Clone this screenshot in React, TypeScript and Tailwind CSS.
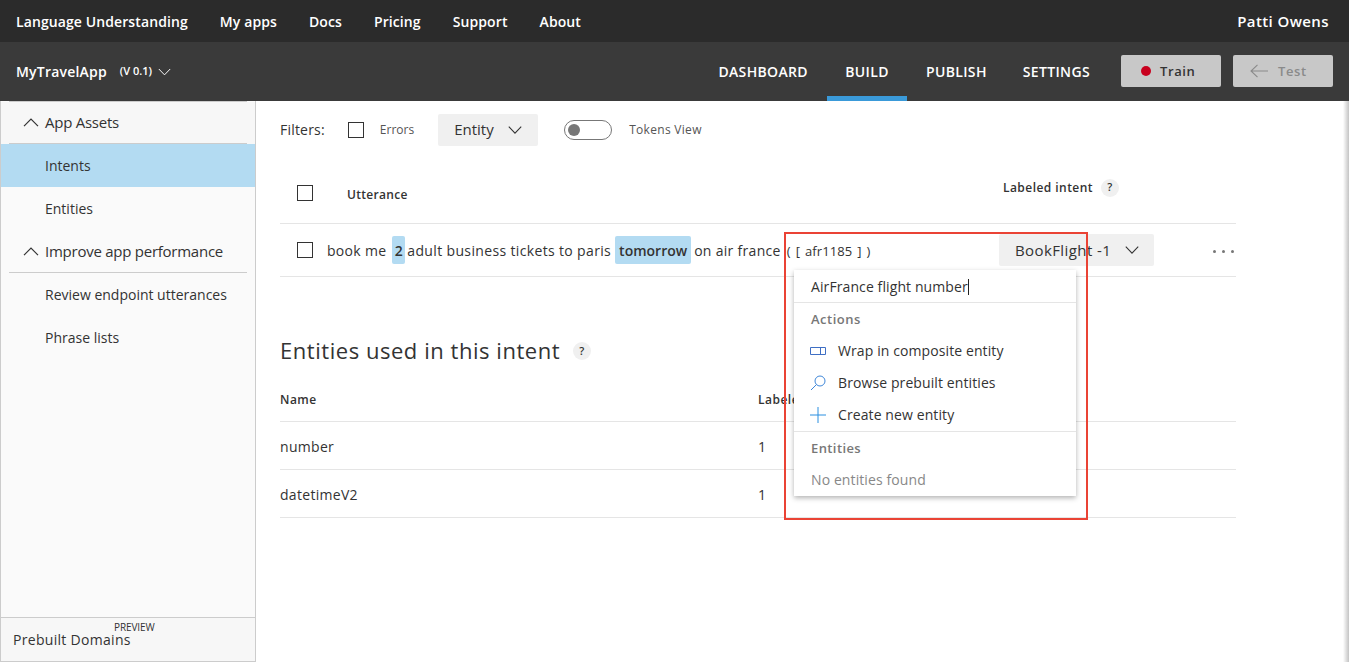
import React from "react";

const Chev = ({ up = false, className = "" }: { up?: boolean; className?: string }) => (
  <svg viewBox="0 0 16 9" className={className} fill="none" stroke="currentColor" strokeWidth="1.2">
    {up ? <path d="M1 8.2 8 1l7 7.2" /> : <path d="M1 .8 8 8l7-7.2" />}
  </svg>
);

const Box = ({ className = "" }: { className?: string }) => (
  <span className={"block w-4 h-4 border border-[#333] shrink-0 " + className} />
);

const Q = () => (
  <span className="w-[18px] h-[18px] rounded-full bg-[#f0f0f0] text-[#333] text-[11px] font-semibold flex items-center justify-center">?</span>
);

const SideHead = ({ children, first = false }: { children: React.ReactNode; first?: boolean }) => (
  <div className={"mx-2 pl-[15px] flex items-center gap-[6px] border-b border-[#ccc] text-[15px] text-[#333] tracking-[-0.25px] " + (first ? "h-[42px]" : "h-[43px]")}>
    <Chev up className="w-4 h-[9px] -ml-[1px] text-[#333]" />
    <span>{children}</span>
  </div>
);

const SideItem = ({ children, active = false }: { children: React.ReactNode; active?: boolean }) => (
  <div className={"h-[43px] pl-[44px] flex items-center text-sm text-[#333] " + (active ? "bg-[#b3dbf2]" : "")}>{children}</div>
);

export default function App() {
  return (
    <div className="relative w-[1349px] h-[662px] overflow-hidden bg-white text-[#333] font-['Open_Sans','Noto_Sans',sans-serif]">
      <header className="h-[42px] bg-[#2b2b2b] flex items-center justify-between pl-4 pr-5 pt-[2px] text-white text-sm font-semibold">
        <nav className="flex items-center gap-8 tracking-[0.1px]">
          <span>Language Understanding</span>
          <span>My apps</span>
          <span>Docs</span>
          <span>Pricing</span>
          <span>Support</span>
          <span>About</span>
        </nav>
        <span className="text-[15px] tracking-[0.4px]">Patti Owens</span>
      </header>

      <div className="h-[59px] bg-[#3a3a3a] flex items-center justify-between pl-4 pr-4 text-white">
        <div className="flex items-center">
          <span className="text-sm font-semibold tracking-[0.2px]">MyTravelApp</span>
          <span className="ml-[13px] text-[11px] font-semibold">(V 0.1)</span>
          <Chev className="ml-[6px] w-[13px] h-[8px]" />
        </div>
        <div className="flex items-center h-full">
          <nav className="flex h-full text-sm font-semibold tracking-[0.35px]">
            <span className="h-full flex items-center px-[19px]">DASHBOARD</span>
            <span className="h-full w-[80px] flex items-center justify-center border-b-[5px] border-[#3a9ad9] pt-[5px]">BUILD</span>
            <span className="h-full flex items-center pl-[19px] pr-[17px]">PUBLISH</span>
            <span className="h-full flex items-center px-[19px]">SETTINGS</span>
          </nav>
          <button className="ml-[12px] -mt-[2px] w-[100px] h-8 bg-[#c8c8c8] rounded-[2px] flex items-center pl-5 gap-[9px] text-[13px] font-semibold text-[#333] tracking-[0.6px]">
            <span className="w-[10px] h-[10px] rounded-full bg-[#c8001e]" />
            <span className="pt-[2px]">Train</span>
          </button>
          <button className="ml-3 -mt-[2px] w-[100px] h-8 bg-[#c8c8c8] rounded-[2px] flex items-center pl-[17px] gap-[10px] text-[13px] font-semibold text-[#8a8a8a] tracking-[0.6px]">
            <svg viewBox="0 0 18 14" className="w-[18px] h-[14px]" fill="none" stroke="#8a8a8a" strokeWidth="1.1"><path d="M18 7H1M7.5.8 1 7l6.5 6.2" /></svg>
            <span className="pt-[2px]">Test</span>
          </button>
        </div>
      </div>

      <div className="flex h-[561px]">
        <aside className="w-[256px] shrink-0 h-full bg-[#fafafa] border-x border-[#ccc] border-b flex flex-col">
          <div className="mx-2 border-t border-[#ccc]" />
          <div className="bg-[#f7f7f7]"><SideHead first>App Assets</SideHead></div>
          <SideItem active>Intents</SideItem>
          <SideItem>Entities</SideItem>
          <SideHead>Improve app performance</SideHead>
          <SideItem>Review endpoint utterances</SideItem>
          <SideItem>Phrase lists</SideItem>
          <div className="mt-auto h-[44px] bg-[#f7f7f7] border-t border-[#ccc] pl-3 relative">
            <span className="absolute left-[113px] top-[4px] text-[10px] leading-[10px] tracking-[-0.1px]">PREVIEW</span>
            <span className="absolute left-3 top-[15px] text-sm leading-[14px] tracking-[0.3px]">Prebuilt Domains</span>
          </div>
        </aside>

        <main className="flex-1 pl-6 pr-[113px] text-sm">
          <div className="h-[32px] mt-[13px] flex items-center">
            <span className="text-sm tracking-[0.2px]">Filters:</span>
            <Box className="ml-[23px] border-[#5c2d91]" />
            <span className="ml-4 text-xs text-[#555]">Errors</span>
            <span className="ml-6 w-[100px] h-8 bg-[#f0f0f0] rounded-[2px] flex items-center pl-4 gap-[13px] text-[15px]">
              Entity <Chev className="w-4 h-[8px]" />
            </span>
            <span className="ml-[26px] w-[48px] h-[20px] -mt-[1px] rounded-full border border-[#777] flex items-center pl-[3px]">
              <span className="w-3 h-3 rounded-full bg-[#777]" />
            </span>
            <span className="ml-[17px] -mt-[1px] text-xs tracking-[0.3px] text-[#555]">Tokens View</span>
          </div>

          <div className="h-[78px] border-b border-[#e5e5e5] flex items-center pl-[17px] pt-[18px]">
            <Box className="mb-[2px]" />
            <span className="ml-[34px] pt-[2px] text-xs font-semibold tracking-[0.3px]">Utterance</span>
            <span className="ml-auto mr-[117px] mb-[12px] flex items-center gap-2 text-xs font-semibold tracking-[0.45px]">Labeled intent <Q /></span>
          </div>

          <div className="h-[53px] border-b border-[#e5e5e5] flex items-center pl-[17px] tracking-[0.3px]">
            <Box />
            <span className="ml-[14px] pt-[2px]">book me</span>
            <span className="ml-[6px] h-7 w-[13px] pt-[2px] bg-[#b3dbf2] rounded-[2px] flex items-center justify-center font-semibold">2</span>
            <span className="ml-[2px] pt-[2px] tracking-[0.35px]">adult business tickets to paris</span>
            <span className="ml-[4px] h-7 w-[76px] pt-[2px] bg-[#b3dbf2] rounded-[2px] flex items-center justify-center font-semibold tracking-normal">tomorrow</span>
            <span className="ml-[3px] pt-[2px]">on air france</span>
            <span className="ml-[6px] pt-[2px] text-[13px] tracking-[0.1px] [word-spacing:1.5px]">( [ afr1185 ] )</span>
            <span className="ml-auto w-[155px] h-8 bg-[#f0f0f0] rounded-[2px] flex items-center pl-4 gap-[13px] pt-[2px] text-[15px] tracking-[0.4px]">
              BookFlight -1 <Chev className="w-4 h-[8px] -mt-[2px]" />
            </span>
            <span className="ml-[59px] mr-[2px] mt-[2px] flex gap-[6px]">
              <i className="w-[3px] h-[3px] rounded-full bg-[#777]" /><i className="w-[3px] h-[3px] rounded-full bg-[#777]" /><i className="w-[3px] h-[3px] rounded-full bg-[#777]" />
            </span>
          </div>

          <h2 className="mt-[57px] h-[34px] flex items-center gap-[13px] text-[22px] font-normal tracking-[0.54px]">
            Entities used in this intent <Q />
          </h2>

          <div className="mt-[17px] h-[37px] pb-[6px] border-b border-[#e5e5e5] flex items-center text-xs font-semibold tracking-[0.5px]">
            <span className="w-[478px]">Name</span>
            <span>Labeled</span>
          </div>
          <div className="h-[48px] pt-[2px] border-b border-[#e5e5e5] flex items-center tracking-[0.3px]">
            <span className="w-[478px]">number</span><span>1</span>
          </div>
          <div className="h-[48px] pt-[2px] border-b border-[#e5e5e5] flex items-center tracking-[0.3px]">
            <span className="w-[478px]">datetimeV2</span><span>1</span>
          </div>
        </main>
      </div>

      <div className="absolute left-[794px] top-[270px] w-[282px] h-[226px] bg-white shadow-[0_2px_5px_rgba(0,0,0,0.3)] text-sm tracking-[0.1px]">
        <div className="h-[33px] pt-[2px] border-b border-[#e5e5e5] flex items-center pl-[17px]">
          <span>AirFrance flight number</span>
          <span className="w-px h-4 bg-[#222]" />
        </div>
        <div className="h-8 flex items-center pl-[17px] text-[13px] tracking-[0.5px] text-[#777] font-semibold">Actions</div>
        <div className="h-8 flex items-center pl-[16px] gap-[12px]">
          <svg viewBox="0 0 16 10" className="w-4 h-[10px] shrink-0" fill="none" stroke="#3f6fc4"><path d="M.5 1.5h15v7H.5zM10.5 1.5v7" /></svg>
          Wrap in composite entity
        </div>
        <div className="h-8 flex items-center pl-[16px] gap-[12px]">
          <svg viewBox="0 0 16 16" className="w-4 h-4 shrink-0" fill="none" stroke="#3f87d9"><circle cx="10" cy="6" r="5" /><path d="M6.5 9.5 1 15" /></svg>
          Browse prebuilt entities
        </div>
        <div className="h-[33px] flex items-center pl-[16px] gap-[12px] border-b border-[#e5e5e5]">
          <svg viewBox="0 0 16 16" className="w-4 h-4 shrink-0" fill="none" stroke="#2b8fe0"><path d="M8 0v16M0 8h16" /></svg>
          Create new entity
        </div>
        <div className="h-8 flex items-center pl-[17px] text-[13px] tracking-[0.4px] text-[#777] font-semibold">Entities</div>
        <div className="h-8 flex items-center pl-[17px] text-[#888]">No entities found</div>
      </div>

      <div className="absolute left-[784px] top-[232px] w-[304px] h-[288px] border-2 border-[#ea4335] pointer-events-none" />
      <div className="absolute right-0 top-[101px] bottom-0 w-[6px] bg-gradient-to-r from-white to-[#c4c4c4] pointer-events-none" />
    </div>
  );
}
